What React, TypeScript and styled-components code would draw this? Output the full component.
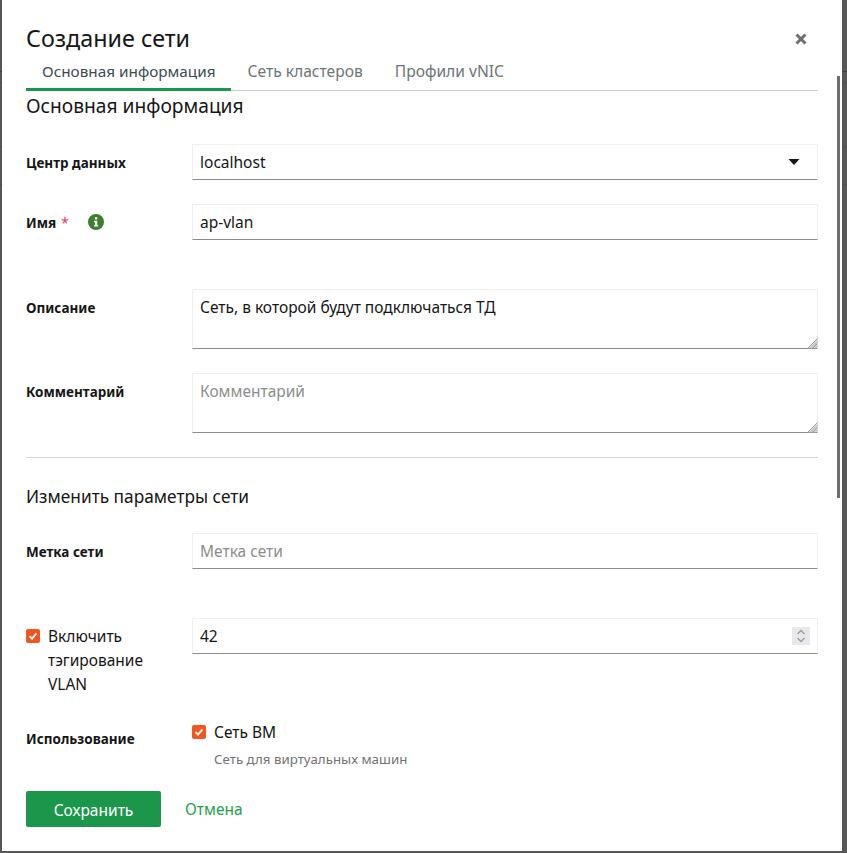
import React from 'react';
import styled, { createGlobalStyle } from 'styled-components';

const FONT = '"Noto Sans", "Open Sans", sans-serif';

const GlobalStyle = createGlobalStyle`
    html, body {
        margin:0;
        padding:0;
        height:100%;
        font-family:${FONT};
        overflow:hidden;
    }
    /* table behind the modal, only a few rows peek out at the edges */
    html {
        background:
            linear-gradient(#3f3f3f, #3f3f3f) 0 71px / 100% 1px no-repeat,
            linear-gradient(#4e4e4e, #4e4e4e) 0 82px / 100% 1px no-repeat,
            linear-gradient(#4e4e4e, #4e4e4e) 0 146px / 100% 1px no-repeat,
            linear-gradient(#4e4e4e, #4e4e4e) 0 184px / 100% 1px no-repeat,
            #575757;
    }
    body {
        background:none;
    }
    * {
        box-sizing:border-box;
    }
`

const TABS = ["Основная информация", "Сеть кластеров", "Профили vNIC"];

const Check = () => (
    <CheckBox>
        <svg width="10" height="10" viewBox="0 0 10 10">
            <path d="M1.5 5.2 L4 7.6 L8.5 2.4" fill="none" stroke="#fff" strokeWidth="1.8" />
        </svg>
    </CheckBox>
)

const Note:React.FC<{ value?:string, placeholder?:string }> = ({ value, placeholder }) => (
    <NoteWrapper>
        <TextArea readOnly value={value} placeholder={placeholder} />
        <ResizeGrip width="11" height="11" viewBox="0 0 11 11">
            <path d="M0.5 10.5 L10.5 0.5 M3 10.5 L10.5 3 M5.5 10.5 L10.5 5.5 M8 10.5 L10.5 8" stroke="#9a9a9a" strokeWidth="1" fill="none" />
            <path d="M2 10.5 L10.5 2 M4.5 10.5 L10.5 4.5 M7 10.5 L10.5 7" stroke="#c4c4c4" strokeWidth="1" fill="none" />
        </ResizeGrip>
    </NoteWrapper>
)

const App:React.FC = () => {
    return(
        <Dialog>
            <GlobalStyle />
            <Header>
                <Title>Создание сети</Title>
                <CloseButton aria-label="close">
                    <svg width="12" height="12" viewBox="0 0 12 12">
                        <path d="M1.5 1.5 L10.5 10.5 M10.5 1.5 L1.5 10.5" stroke="#6f6f6f" strokeWidth="3" />
                    </svg>
                </CloseButton>
            </Header>
            <Tabs>
                {TABS.map((tab, i) => <Tab key={tab} $active={i === 0}>{tab}</Tab>)}
            </Tabs>
            <Scrollbar />
            <Form>
                <SectionTitle>Основная информация</SectionTitle>
                <Row $top={19}>
                    <Label>Центр данных</Label>
                    <SelectField>
                        localhost
                        <svg width="12" height="6" viewBox="0 0 12 6">
                            <path d="M0.5 0 H11.5 L6 6 Z" fill="#161616" />
                        </svg>
                    </SelectField>
                </Row>
                <Row $top={24}>
                    <Label>
                        Имя
                        <Required>*</Required>
                        <InfoIcon>
                            <svg width="16" height="16" viewBox="0 0 16 16">
                                <circle cx="8" cy="8" r="8" fill="#3d7f2f" />
                                <rect x="6.9" y="3.2" width="2.4" height="2.3" fill="#fff" />
                                <path d="M6 6.8 H9.3 V11.2 H10.2 V12.6 H6 V11.2 H6.9 V8.2 H6 Z" fill="#fff" />
                            </svg>
                        </InfoIcon>
                    </Label>
                    <Input readOnly value="ap-vlan" />
                </Row>
                <Row $top={49}>
                    <Label>Описание</Label>
                    <Note value="Сеть, в которой будут подключаться ТД" />
                </Row>
                <Row $top={24}>
                    <Label>Комментарий</Label>
                    <Note placeholder="Комментарий" />
                </Row>
                <Divider />
                <SubTitle>Изменить параметры сети</SubTitle>
                <Row $top={24}>
                    <Label>Метка сети</Label>
                    <Input readOnly placeholder="Метка сети" />
                </Row>
                <Row $top={49}>
                    <CheckLabel>
                        <Check />
                        <span>Включить тэгирование VLAN</span>
                    </CheckLabel>
                    <NumberWrapper>
                        <NumberInput type="number" readOnly value="42" />
                        <Spinner>
                            <svg width="18" height="18" viewBox="0 0 18 18">
                                <path d="M5.5 7 L9 3.5 L12.5 7 M5.5 11 L9 14.5 L12.5 11" fill="none" stroke="#9b9ba6" strokeWidth="1.4" />
                            </svg>
                        </Spinner>
                    </NumberWrapper>
                </Row>
                <UsageRow>
                    <Label>Использование</Label>
                    <div>
                        <UsageOption>
                            <Check />
                            Сеть ВМ
                        </UsageOption>
                        <Hint>Сеть для виртуальных машин</Hint>
                    </div>
                </UsageRow>
                <Actions>
                    <SaveButton>Сохранить</SaveButton>
                    <CancelButton>Отмена</CancelButton>
                </Actions>
            </Form>
        </Dialog>
    )
}

export default App;

const Dialog = styled.div`
    position:relative;
    margin-left:2px;
    width:840px;
    height:851px;
    padding:0 24px;
    background:#fff;
    color:#161616;
    overflow:hidden;
`

const Header = styled.div`
    height:60px;
    padding-top:22px;
    display:flex;
    justify-content:space-between;
    align-items:flex-start;
`

const Title = styled.h1`
    margin:0;
    font-size:23.3px;
    line-height:32px;
    font-weight:400;
`

const CloseButton = styled.button`
    margin:11px 9px 0 0;
    padding:0;
    width:16px;
    height:12px;
    display:flex;
    justify-content:center;
    border:0;
    background:none;
`

const Tabs = styled.div`
    display:flex;
    height:31px;
    border-bottom:1px solid #cfcfcf;
`

const Tab = styled.div<{ $active:boolean }>`
    height:31px;
    padding:0 16px;
    font-size:${({$active}) => $active ? '15.3px' : '15.6px'};
    line-height:22px;
    color:${({$active}) => $active ? '#3d4a52' : '#6f7478'};
    border-bottom:${({$active}) => $active ? '3px solid #1c964b' : '0'};
`

const Scrollbar = styled.div`
    position:absolute;
    top:76px;
    right:2px;
    width:3px;
    height:422px;
    background:#6e6e6e;
`

const Form = styled.div`
    display:flex;
    flex-direction:column;
`

const SectionTitle = styled.h2`
    margin:0;
    height:34px;
    font-size:19.2px;
    line-height:30px;
    font-weight:400;
`

const Row = styled.div<{ $top:number }>`
    display:grid;
    grid-template-columns:166px 626px;
    margin-top:${({$top}) => $top}px;
`

const Label = styled.label`
    display:flex;
    align-items:flex-start;
    padding-top:9px;
    font-size:13.5px;
    line-height:20px;
    font-weight:700;
`

const Required = styled.span`
    margin-left:5px;
    font-weight:400;
    color:#e0364c;
`

const InfoIcon = styled.span`
    margin:1px 0 0 19px;
    display:flex;
`

const fieldStyles = `
    width:100%;
    height:36px;
    padding:0 7px;
    border:1px solid #f0f0f0;
    border-bottom-color:#8d8d8d;
    border-radius:0;
    outline:none;
    background:#fff;
    color:#161616;
    font-family:${FONT};
    font-size:15.5px;
    &::placeholder {
        color:#8d8d8d;
        opacity:1;
    }
`

const SelectField = styled.div`
    ${fieldStyles}
    display:flex;
    justify-content:space-between;
    align-items:center;
    padding-right:17px;
`

const Input = styled.input`
    ${fieldStyles}
`

const NumberWrapper = styled.div`
    position:relative;
`

const NumberInput = styled.input`
    ${fieldStyles}
    appearance:textfield;
    &::-webkit-inner-spin-button {
        display:none;
    }
`

const Spinner = styled.span`
    position:absolute;
    top:9px;
    right:8px;
    width:18px;
    height:18px;
    display:flex;
    background:#e8e8ec;
`

const NoteWrapper = styled.div`
    position:relative;
    height:60px;
`

const TextArea = styled.textarea`
    ${fieldStyles}
    display:block;
    height:60px;
    padding-top:6px;
    resize:none;
`

const ResizeGrip = styled.svg`
    position:absolute;
    right:0;
    bottom:0;
`

const Divider = styled.hr`
    width:792px;
    margin:24px 0 0;
    border:0;
    border-top:1px solid #d4d4d4;
`

const SubTitle = styled.h3`
    margin:27px 0 0;
    height:24px;
    font-size:17.3px;
    line-height:24px;
    font-weight:400;
`

const CheckLabel = styled.div`
    display:flex;
    gap:8px;
    padding-right:20px;
    font-size:15.5px;
    line-height:24px;
    margin-top:6px;
`

const CheckBox = styled.span`
    flex:none;
    display:flex;
    justify-content:center;
    align-items:center;
    width:14px;
    height:14px;
    margin-top:5px;
    border-radius:2px;
    background:#f1561f;
`

const UsageRow = styled.div`
    display:grid;
    grid-template-columns:166px 626px;
    margin-top:24px;
`

const UsageOption = styled.div`
    display:flex;
    gap:8px;
    font-size:15.5px;
    line-height:24px;
    height:24px;
`

const Hint = styled.div`
    margin:5px 0 0 22px;
    font-size:13.3px;
    line-height:20px;
    color:#737373;
`

const Actions = styled.div`
    display:flex;
    align-items:center;
    gap:24px;
    margin-top:22px;
`

const SaveButton = styled.button`
    width:135px;
    height:36px;
    padding:1px 0 0;
    border:0;
    border-radius:2px;
    background:#1c964b;
    color:#fff;
    font-family:${FONT};
    font-size:15.5px;
`

const CancelButton = styled.button`
    padding:0;
    border:0;
    background:none;
    color:#24a148;
    font-family:${FONT};
    font-size:15.5px;
`
